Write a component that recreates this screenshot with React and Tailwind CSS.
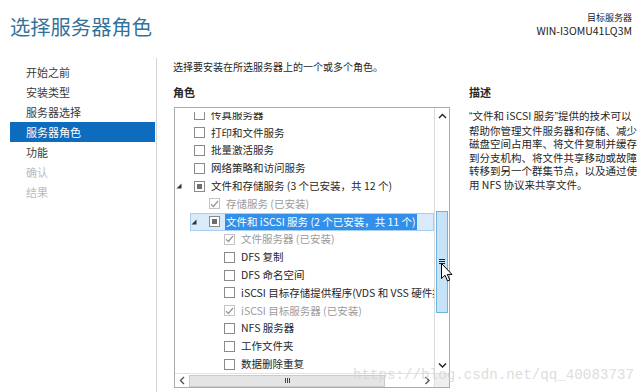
import React from 'react';

// 左侧导航项
const navItems = [
  { label: '开始之前' },
  { label: '安装类型' },
  { label: '服务器选择' },
  { label: '服务器角色', active: true },
  { label: '功能' },
  { label: '确认', disabled: true },
  { label: '结果', disabled: true },
];

// 角色树（已滚动到中间位置）
const roles = [
  { level: 1, label: '传真服务器' },
  { level: 1, label: '打印和文件服务' },
  { level: 1, label: '批量激活服务' },
  { level: 1, label: '网络策略和访问服务' },
  { level: 1, label: '文件和存储服务 (3 个已安装，共 12 个)', state: 'partial', expanded: true },
  { level: 2, label: '存储服务 (已安装)', state: 'installed' },
  { level: 2, label: '文件和 iSCSI 服务 (2 个已安装，共 11 个)', state: 'partial', expanded: true, selected: true },
  { level: 3, label: '文件服务器 (已安装)', state: 'installed' },
  { level: 3, label: 'DFS 复制' },
  { level: 3, label: 'DFS 命名空间' },
  { level: 3, label: 'iSCSI 目标存储提供程序(VDS 和 VSS 硬件提供程序)' },
  { level: 3, label: 'iSCSI 目标服务器 (已安装)', state: 'installed' },
  { level: 3, label: 'NFS 服务器' },
  { level: 3, label: '工作文件夹' },
  { level: 3, label: '数据删除重复' },
];

const indentClass = { 1: 'pl-0', 2: 'pl-[15px]', 3: 'pl-[30px]' };

const descriptionLines = [
  '帮助你管理文件服务器和存储、减少',
  '磁盘空间占用率、将文件复制并缓存',
  '到分支机构、将文件共享移动或故障',
  '转移到另一个群集节点，以及通过使',
  '用 NFS 协议来共享文件。',
];

function Checkbox({ state }) {
  if (state === 'installed') {
    return (
      <span className="w-[11px] h-[11px] border border-[#c4c4c4] bg-white flex items-center justify-center shrink-0">
        <svg width="9" height="8" viewBox="0 0 9 8">
          <path d="M1 4.2 L3.4 6.5 L8 1" fill="none" stroke="#9a9a9a" strokeWidth="1.3" />
        </svg>
      </span>
    );
  }
  if (state === 'partial') {
    return (
      <span className="w-[11px] h-[11px] border border-[#8a8a8a] bg-white flex items-center justify-center shrink-0">
        <span className="w-[5px] h-[5px] bg-[#6f6f6f]" />
      </span>
    );
  }
  return <span className="w-[11px] h-[11px] border border-[#8a8a8a] bg-white shrink-0" />;
}

function Expander() {
  return (
    <svg width="6" height="6" viewBox="0 0 6 6" className="ml-[1px]">
      <polygon points="5.5,0.5 5.5,5.5 0.5,5.5" fill="#333" />
    </svg>
  );
}

function RoleRow({ role }) {
  const muted = role.state === 'installed';
  return (
    <div className={`h-[17.8px] flex ${indentClass[role.level]}`}>
      <div
        className={`flex-1 flex items-center whitespace-nowrap ${
          role.selected ? 'bg-[#d9eafb] shadow-[inset_0_0_0_1px_#a6cff2]' : ''
        }`}
      >
        <div className="w-[19px] shrink-0 flex items-center">{role.expanded && <Expander />}</div>
        <Checkbox state={role.state} />
        {role.selected ? (
          <span className="ml-[5px] px-[1px] leading-[16px] bg-[#3390ea] text-white">{role.label}</span>
        ) : (
          <span className={`ml-[6px] leading-[16px] ${muted ? 'text-[#9b9b9b]' : 'text-[#262626]'}`}>
            {role.label}
          </span>
        )}
      </div>
    </div>
  );
}

function Chevron({ dir }) {
  const d = {
    up: 'M1 5 L4.5 1.5 L8 5',
    down: 'M1 1.5 L4.5 5 L8 1.5',
    left: 'M5 1 L1.5 4.5 L5 8',
    right: 'M1.5 1 L5 4.5 L1.5 8',
  }[dir];
  const vertical = dir === 'up' || dir === 'down';
  return (
    <svg width={vertical ? 9 : 7} height={vertical ? 7 : 9} viewBox={vertical ? '0 0 9 7' : '0 0 7 9'}>
      <path d={d} fill="none" stroke={vertical ? '#222' : '#555'} strokeWidth="1.4" />
    </svg>
  );
}

function RoleList() {
  return (
    <div className="ml-[1px] w-[276px] h-[281px] border border-[#ababab] flex flex-col bg-white">
      <div className="flex flex-1 min-h-0">
        <div className="flex-1 pt-[4px] min-w-0">
          <div className="h-full overflow-hidden text-[10.5px]">
            <div className="-mt-[6px]">
              {roles.map((role, i) => (
                <RoleRow key={i} role={role} />
              ))}
            </div>
          </div>
        </div>
        {/* 垂直滚动条 */}
        <div className="w-[15px] border-l border-[#dcdcdc] flex flex-col">
          <div className="h-[16px] flex items-center justify-center">
            <Chevron dir="up" />
          </div>
          <div className="flex-1">
            <div className="mt-[87px] mx-[1px] h-[102px] bg-[#c6e3f8] border border-[#6fb3e3] flex items-center justify-center">
              <div className="flex flex-col gap-[1px] -mt-[2px]">
                <span className="w-[6px] h-[1px] bg-[#222]" />
                <span className="w-[6px] h-[1px] bg-[#222]" />
                <span className="w-[6px] h-[1px] bg-[#222]" />
              </div>
            </div>
          </div>
          <div className="h-[16px] flex items-center justify-center">
            <Chevron dir="down" />
          </div>
        </div>
      </div>
      {/* 水平滚动条 */}
      <div className="h-[14px] flex border-t border-[#e2e2e2]">
        <div className="w-[14px] flex items-center justify-center">
          <Chevron dir="left" />
        </div>
        <div className="flex-1 flex items-center">
          <div className="w-[196px] h-[12px] bg-[#e4e4e4] border border-[#cbcbcb] flex items-center justify-center gap-[1px]">
            <span className="w-[1px] h-[5px] bg-[#444]" />
            <span className="w-[1px] h-[5px] bg-[#444]" />
            <span className="w-[1px] h-[5px] bg-[#444]" />
          </div>
        </div>
        <div className="w-[14px] flex items-center justify-center">
          <Chevron dir="right" />
        </div>
        <div className="w-[15px] bg-[#efefef] border-l border-[#dcdcdc]" />
      </div>
    </div>
  );
}

export default function App() {
  return (
    <div className="relative w-[640px] h-[392px] bg-white overflow-hidden font-['Noto_Sans_CJK_SC','Noto_Sans',sans-serif]">
      {/* 标题栏 */}
      <div className="h-[58px] flex justify-between">
        <h1 className="ml-[10px] pt-[12px] text-[20.3px] leading-[28px] text-[#33739b]">选择服务器角色</h1>
        <div className="pr-[8px] pt-[11px] text-right text-[#222] leading-[13px]">
          <div className="text-[9px]">目标服务器</div>
          <div className="text-[10.5px]">WIN-I3OMU41LQ3M</div>
        </div>
      </div>

      <div className="flex h-[334px]">
        {/* 左侧导航 */}
        <div className="w-[157px] border-r border-[#d6d6d6] pt-[4px] text-[11px]">
          {navItems.map((item) => (
            <div
              key={item.label}
              className={`ml-[10px] w-[145px] h-[20px] leading-[20px] pl-[16px] ${
                item.active
                  ? 'bg-[#0e6cbf] text-white'
                  : item.disabled
                  ? 'text-[#bcbcbc]'
                  : 'text-[#3a3a3a]'
              }`}
            >
              {item.label}
            </div>
          ))}
        </div>

        {/* 主内容 */}
        <div className="pl-[16px] pt-[2px] flex text-[#262626]">
          <div className="w-[277px]">
            <p className="text-[10px] leading-[14px] whitespace-nowrap">选择要安装在所选服务器上的一个或多个角色。</p>
            <h2 className="mt-[11px] text-[11px] leading-[14px] font-bold">角色</h2>
            <div className="mt-[8px]">
              <RoleList />
            </div>
          </div>
          <div className="ml-[19px] w-[171px] pt-[25px]">
            <h2 className="text-[11px] leading-[14px] font-bold">描述</h2>
            <div className="mt-[10px] text-[10.5px] leading-[13.6px]">
              <div className="whitespace-nowrap">
                <span className="font-['Liberation_Sans',sans-serif]">“</span>文件和 iSCSI 服务
                <span className="font-['Liberation_Sans',sans-serif]">”</span>提供的技术可以
              </div>
              {descriptionLines.map((line) => (
                <div key={line} className="whitespace-nowrap">
                  {line}
                </div>
              ))}
            </div>
          </div>
        </div>
      </div>

      {/* 鼠标指针 */}
      <svg className="absolute left-[441px] top-[263px]" width="12" height="19" viewBox="0 0 12 19">
        <path d="M0.5 0.5 L0.5 15.5 L4 12.2 L6.6 18 L8.8 17 L6.3 11.4 L11 11.4 Z" fill="#fff" stroke="#000" strokeWidth="1" />
      </svg>

      {/* 水印 */}
      <div className="absolute left-[353px] top-[366px] text-[14.2px] leading-[18px] text-[#d4d4d4]/80 font-['Liberation_Mono',monospace] whitespace-nowrap pointer-events-none">
        https://blog.csdn.net/qq_40083737
      </div>
    </div>
  );
}
